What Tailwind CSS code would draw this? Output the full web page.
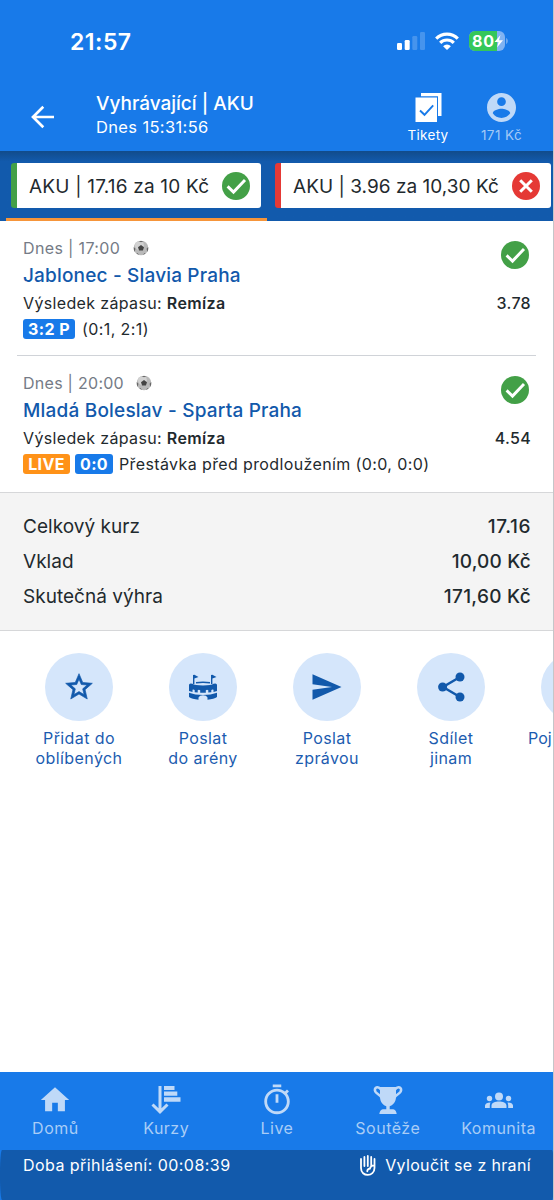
<!DOCTYPE html>
<html lang="cs">
<head>
<meta charset="utf-8">
<title>Vyhrávající | AKU</title>
<script src="https://cdn.jsdelivr.net/npm/@tailwindcss/browser@4"></script>
</head>
<body class="bg-white">
<svg class="hidden">
  <symbol id="ok" viewBox="0 0 28 28"><circle cx="14" cy="14" r="14" fill="#43a047"/><path d="M5.600 14.400l5.900 5.700L23 8" fill="none" stroke="#fff" stroke-width="2.900"/></symbol>
  <symbol id="bad" viewBox="0 0 28 28"><circle cx="14" cy="14" r="14" fill="#e53935"/><path d="M8.200 8.200l11.600 11.600M19.800 8.200L8.200 19.800" fill="none" stroke="#fff" stroke-width="3"/></symbol>
  <symbol id="ball" viewBox="0 0 16 16"><circle cx="8" cy="8" r="7.300" fill="#b9b9b9"/><circle cx="6.500" cy="5.500" r="4.500" fill="#d2d2d2"/><path d="M8 5l3 2.200-1.100 3.400H6.100L5 7.200z" fill="#444"/><path d="M5.500.9L8 2.300l2.500-1.400zM.8 7l1.600 1.700-.7 3.300L.8 9.500zM15.200 7l-1.600 1.700.7 3.300.9-2.500zM4.500 12.900l1.700 2-2.400-1.200zM11.500 12.900l-1.700 2 2.400-1.200z" fill="#666"/></symbol>
</svg>
<div class="relative flex h-[1200px] w-[554px] flex-col overflow-hidden border-r border-[#c4c6c9] bg-white font-['Inter',sans-serif] text-[#1f2a2e]">
  <header class="-mr-px h-[151px] shrink-0 bg-[#187ae9] text-white">
    <div class="flex h-[82px] items-center justify-between pr-[46px] pl-[70px]">
      <span class="pt-px text-[23px] leading-7 font-semibold tracking-[0.500px]">21:57</span>
      <div class="flex items-center">
        <svg class="mr-[10px]" width="28" height="18" viewBox="0 0 28 18" fill="#fff"><rect x="0" y="11" width="5" height="7" rx="1.300"/><rect x="7.700" y="8" width="5" height="10" rx="1.300"/><rect x="15.300" y="4" width="5" height="14" rx="1.300" opacity=".2"/><rect x="23" y="0" width="5" height="18" rx="1.300" opacity=".2"/></svg>
        <svg class="mr-[10px]" width="24" height="18" viewBox="0 0 24 18"><g fill="none" stroke="#fff" stroke-width="3.200"><path d="M1.200 6.600a15.500 15.500 0 0 1 21.600 0"/><path d="M5.200 10.800a9.600 9.600 0 0 1 13.600 0"/></g><path d="M12 18l-3.900-3.800a5.500 5.500 0 0 1 7.800 0z" fill="#fff"/></svg>
        <svg width="39" height="20" viewBox="0 0 39 20"><defs><clipPath id="bt"><rect width="36" height="20" rx="6"/></clipPath></defs><g clip-path="url(#bt)"><rect width="36" height="20" fill="#80b3f2"/><rect width="28" height="20" fill="#35c759"/></g><path d="M37.200 7c2 .8 2 5.200 0 6z" fill="#80b3f2"/><text x="3" y="15.700" font-size="16" font-weight="700" fill="#fff" textLength="22">80</text><path d="M31.500 4l-6 7h4l-1.500 5.500 6-7.300h-4z" fill="#fff"/></svg>
      </div>
    </div>
    <div class="flex h-[69px]">
      <svg class="mt-[23px] ml-[31px]" width="24" height="24" viewBox="0 0 24 24" fill="none" stroke="#fff" stroke-width="2.700"><path d="M23 12H2.500M12.300 1.800L2 12l10.300 10.200"/></svg>
      <div class="ml-[41px] flex-1 pt-[10px] whitespace-nowrap">
        <div class="h-[23px] text-[19px] leading-6 font-medium tracking-[0px]">Vyhrávající | AKU</div>
        <div class="text-[16.500px] leading-6 tracking-[0.350px]">Dnes 15:31:56</div>
      </div>
      <div class="flex w-[74px] flex-col items-center">
        <svg class="mt-[11px]" width="27" height="30" viewBox="0 0 27 30"><path d="M6 0h20.500v23H23V3.200H6z" fill="#fff"/><path d="M.5 4.500H22V29H.5z" fill="#fff"/><path d="M5 17.500l4.500 4.300 8.700-9.500" fill="none" stroke="#187ae9" stroke-width="1.900"/></svg>
        <span class="mt-[3px] text-[13.500px] leading-[18px] tracking-[0.300px]">Tikety</span>
      </div>
      <div class="mr-[16px] flex w-[73px] flex-col items-center text-[#bfd9f8]">
        <svg class="mt-[11px]" width="29" height="29" viewBox="2 2 20 20" fill="currentColor"><path d="M12 2C6.480 2 2 6.480 2 12s4.480 10 10 10 10-4.480 10-10S17.520 2 12 2zm0 3c1.660 0 3 1.340 3 3s-1.340 3-3 3-3-1.340-3-3 1.340-3 3-3zm0 14.200c-2.500 0-4.710-1.280-6-3.220.03-1.990 4-3.080 6-3.080 1.990 0 5.970 1.090 6 3.080-1.290 1.940-3.500 3.220-6 3.220z"/></svg>
        <span class="mt-1 text-[13.500px] leading-[18px] tracking-[0.400px] text-[#a3c9f6]">171 Kč</span>
      </div>
    </div>
  </header>

  <nav class="-mr-px flex h-[70px] shrink-0 bg-[#125aac] bg-linear-to-b from-[#114b8b] via-[#125aac] via-15% to-[#125aac] pl-[6px] whitespace-nowrap">
    <div class="flex w-[261px] shrink-0 flex-col justify-between border-b-3 border-[#f6953a] pr-[6px] pl-[5px] pt-3">
      <div class="flex h-[45px] items-center justify-between rounded-[3px] border-l-6 border-[#43a047] bg-white pr-[11px] pl-3">
        <span class="pt-[3px] text-[19px] leading-6 tracking-[0.200px]">AKU | 17.16 za 10 Kč</span>
        <svg width="28" height="28"><use href="#ok"/></svg>
      </div>
    </div>
    <div class="ml-[8px] flex h-[57px] w-[276px] shrink-0 pt-3">
      <div class="flex h-[45px] w-full items-center justify-between rounded-[3px] border-l-6 border-[#e53935] bg-white pr-[11px] pl-3">
        <span class="pt-[3px] text-[19px] leading-6 tracking-[0.030px]">AKU | 3.96 za 10,30 Kč</span>
        <svg width="28" height="28"><use href="#bad"/></svg>
      </div>
    </div>
  </nav>

  <main class="flex flex-1 flex-col">
    <section class="mx-[17px] flex h-[135px] shrink-0 justify-between border-b border-[#d0d3d8] pr-[5px] pl-[6px] pt-[15px]">
      <div class="flex flex-col whitespace-nowrap">
        <div class="flex h-6 items-center gap-[13px] text-base tracking-[0.350px] text-[#757b86]"><span>Dnes | 17:00</span><svg width="16" height="16"><use href="#ball"/></svg></div>
        <div class="h-[30px] text-[19px] leading-8 font-medium tracking-[0.170px] text-[#1259ab]">Jablonec - Slavia Praha</div>
        <div class="h-[26px] text-base leading-[26px] tracking-[0.350px]">Výsledek zápasu: <span class="font-semibold">Remíza</span></div>
        <div class="flex h-[26px] items-center gap-[7px] text-base tracking-[0.400px]"><span class="h-5 w-[52px] rounded-[3px] bg-[#187ae9] text-center leading-5 font-bold text-white">3:2 P</span><span>(0:1, 2:1)</span></div>
      </div>
      <div class="flex flex-col items-end pt-[5px] text-base leading-6 font-medium tracking-[0.300px]"><svg class="mr-[2px] mb-[22px]" width="28" height="28"><use href="#ok"/></svg>3.78</div>
    </section>
    <section class="mx-[17px] flex h-[136px] shrink-0 justify-between pr-[5px] pl-[6px] pt-[15px]">
      <div class="flex flex-col whitespace-nowrap">
        <div class="flex h-6 items-center gap-[12px] text-base tracking-[0.270px] text-[#757b86]"><span>Dnes | 20:00</span><svg width="16" height="16"><use href="#ball"/></svg></div>
        <div class="h-[30px] text-[19px] leading-8 font-medium tracking-[0.200px] text-[#1259ab]">Mladá Boleslav - Sparta Praha</div>
        <div class="h-[26px] text-base leading-[26px] tracking-[0.350px]">Výsledek zápasu: <span class="font-semibold">Remíza</span></div>
        <div class="flex h-[26px] items-center text-base tracking-[0.380px]"><span class="mr-[5px] h-5 w-[47px] rounded-[3px] bg-[#ff9218] text-center leading-5 font-bold text-white">LIVE</span><span class="mr-[6px] h-5 w-[38px] rounded-[3px] bg-[#187ae9] text-center leading-5 font-bold text-white">0:0</span><span>Přestávka před prodloužením (0:0, 0:0)</span></div>
      </div>
      <div class="flex flex-col items-end pt-[5px] text-base leading-6 font-medium tracking-[0.300px]"><svg class="mr-[2px] mb-[22px]" width="28" height="28"><use href="#ok"/></svg>4.54</div>
    </section>

    <section class="h-[139px] shrink-0 border-y border-[#d6d7d9] bg-[#f4f4f4] pr-[22px] pl-[23px] pt-4 text-[19px] leading-[35px] tracking-[0.030px]">
      <div class="flex justify-between"><span>Celkový kurz</span><span class="font-medium tracking-[0.600px]">17.16</span></div>
      <div class="flex justify-between"><span>Vklad</span><span class="font-medium tracking-[0.200px]">10,00 Kč</span></div>
      <div class="flex justify-between"><span>Skutečná výhra</span><span class="font-medium tracking-[0.300px]">171,60 Kč</span></div>
    </section>

    <section class="flex overflow-hidden pt-[22px] pl-[17px] text-center text-base leading-5 tracking-[0.400px] whitespace-nowrap text-[#1c5cb0]">
      <div class="flex w-[124px] shrink-0 flex-col items-center">
        <div class="mb-[7px] flex size-[68px] items-center justify-center rounded-full bg-[#d5e6fb]"><svg width="32" height="32" viewBox="0 0 24 24" fill="#1259ab" stroke="#1259ab" stroke-width=".5"><path d="M22 9.240l-7.190-.62L12 2 9.190 8.630 2 9.240l5.460 4.730L5.820 21 12 17.270 18.180 21l-1.630-7.030L22 9.240zM12 15.400l-3.760 2.270 1-4.280-3.320-2.880 4.380-.38L12 6.100l1.710 4.040 4.380.38-3.320 2.880 1 4.280L12 15.400z"/></svg></div>
        <div>Přidat do<br>oblíbených</div>
      </div>
      <div class="flex w-[124px] shrink-0 flex-col items-center">
        <div class="mb-[7px] flex size-[68px] items-center justify-center rounded-full bg-[#d5e6fb]"><svg width="30" height="28" viewBox="0 0 30 28" fill="#1259ab"><path d="M5 2v9h1.400V5.500L10.500 4 6.400 1.800zM23 2v9h1.400V5.500L28.500 4l-4.100-2.200z"/><path d="M8 9.800q7-1 14 0" fill="none" stroke="#1259ab" stroke-width="1.500"/><path d="M1 12q0-2.200 3.500-1.200 2 1.600 10.500 1.600t10.500-1.600Q29 9.800 29 12v6l-3.500 1v-2.200q-1.300-1-2.200.4v2l-3 .4v-2.400q-1.300-1-2.500.1v2.500h-5.600v-2.500q-1.200-1.100-2.500-.1v2.400l-3-.4v-2q-.9-1.400-2.200-.4V19L1 18z"/><path d="M1 19.800q6 2.200 14 2.200t14-2.200v4.300q-3 2.200-9.500 2.700v-2.300q-1-2.300-4.500-2.300t-4.500 2.300v2.300Q4 26.300 1 24.100z"/></svg></div>
        <div>Poslat<br>do arény</div>
      </div>
      <div class="flex w-[124px] shrink-0 flex-col items-center">
        <div class="mb-[7px] flex size-[68px] items-center justify-center rounded-full bg-[#d5e6fb]"><svg width="30" height="26" viewBox="0 0 30 26" fill="#1259ab"><path d="M.5.300L29.500 13 .5 25.700V15.800L20 13 .5 10.200z"/></svg></div>
        <div>Poslat<br>zprávou</div>
      </div>
      <div class="flex w-[124px] shrink-0 flex-col items-center">
        <div class="mb-[7px] flex size-[68px] items-center justify-center rounded-full bg-[#d5e6fb]"><svg width="27" height="30" viewBox="0 0 27 30" fill="#1259ab"><path d="M22 5L5 15l17 10" fill="none" stroke="#1259ab" stroke-width="2.500"/><circle cx="22" cy="5" r="4.500"/><circle cx="4.600" cy="15" r="4.500"/><circle cx="22" cy="25" r="4.500"/></svg></div>
        <div>Sdílet<br>jinam</div>
      </div>
      <div class="flex w-[124px] shrink-0 flex-col items-center">
        <div class="mb-[7px] size-[68px] rounded-full bg-[#d5e6fb]"></div>
        <div class="w-[94px] text-left tracking-[0px]">Poj</div>
      </div>
    </section>
  </main>

  <nav class="-mr-px flex h-[78px] shrink-0 bg-[#187ae9] text-base leading-[22px] tracking-[0.500px] text-[#a9cdf7]">
    <div class="flex flex-1 flex-col items-center pt-[11px]">
      <svg width="34" height="34" viewBox="0 0 24 24" fill="#bfd9f8"><path d="M10 20v-6h4v6h5v-8h3L12 3 2 12h3v8z"/></svg><span>Domů</span>
    </div>
    <div class="flex flex-1 flex-col items-center pt-[11px]">
      <svg width="34" height="34" viewBox="0 0 34 34" fill="#bfd9f8"><path d="M11 3v26M3.500 21.500l7.500 7.300 7.500-7.300" fill="none" stroke="#bfd9f8" stroke-width="3"/><path d="M15 3h10.500v4H15zM15 8.600h13.300v4.200H15zM15 14.200h16.500v4.600H15z"/></svg><span>Kurzy</span>
    </div>
    <div class="flex flex-1 flex-col items-center pt-[11px]">
      <svg width="34" height="34" viewBox="0 0 24 24" fill="#bfd9f8"><path d="M15 1H9v2h6V1zm-4 13h2V8h-2v6zm8.030-6.610l1.420-1.420c-.43-.51-.9-.99-1.410-1.410l-1.420 1.420C16.070 4.740 14.120 4 12 4c-4.970 0-9 4.030-9 9s4.020 9 9 9 9-4.030 9-9c0-2.120-.74-4.070-1.970-5.610zM12 20c-3.870 0-7-3.130-7-7s3.130-7 7-7 7 3.130 7 7-3.130 7-7 7z"/></svg><span>Live</span>
    </div>
    <div class="flex flex-1 flex-col items-center pt-[11px]">
      <svg width="34" height="34" viewBox="0 0 34 34" fill="#bfd9f8"><path d="M9 4h16v10c0 5-3.500 8.500-6.300 9.300v3h3.500q3 .7 3.500 4.700H8.300q.5-4 3.500-4.700h3.500v-3C12.500 22.500 9 19 9 14z"/><path d="M10 6.500C7 2.500 2.500 4.500 4.300 8.500c1.200 2.500 4.700 3 6.200 6M24 6.500c3-4 7.500-2 5.700 2-1.200 2.500-4.700 3-6.200 6" fill="none" stroke="#bfd9f8" stroke-width="2.600"/></svg><span>Soutěže</span>
    </div>
    <div class="flex flex-1 flex-col items-center pt-[11px]">
      <svg width="30" height="34" viewBox="0 0 30 34" fill="#bfd9f8"><circle cx="15" cy="13.500" r="4"/><circle cx="5.500" cy="15.500" r="2.700"/><circle cx="24.500" cy="15.500" r="2.700"/><path d="M7.500 25v-2.500c0-5.500 15-5.500 15 0V25zM1 25v-2.500Q1.500 19.500 6.500 19.500 5.800 21 5.800 22.500V25zM29 25v-2.500Q28.500 19.500 23.500 19.500q.7 1.500.7 3V25z"/></svg><span>Komunita</span>
    </div>
  </nav>
  <footer class="-mr-px h-[50px] shrink-0 bg-[#187ae9]">
    <div class="flex h-full items-start justify-between rounded-[2px/24px] bg-[#125aac] px-[23px] pt-[3px] text-base leading-6 whitespace-nowrap text-white">
      <span class="tracking-[0.450px]">Doba přihlášení: 00:08:39</span>
      <div class="flex items-start gap-[9px] tracking-[0.350px]">
        <svg class="mt-[2px]" width="16" height="21" viewBox="0 0 16 21" fill="none" stroke="#fff" stroke-width="1.800" stroke-linecap="round"><path d="M1 4v9c0 9.500 13.500 9 13.500 0V4M4.400 2v9M7.800 1v10M11.200 2v9.500M14.500 10.500c-2.500-.3-4.300 1-4.500 3-2 .3-2.700 1.300-2.700 2.800"/></svg>
        <span>Vyloučit se z hraní</span>
      </div>
    </div>
  </footer>
</div>
</body>
</html>
